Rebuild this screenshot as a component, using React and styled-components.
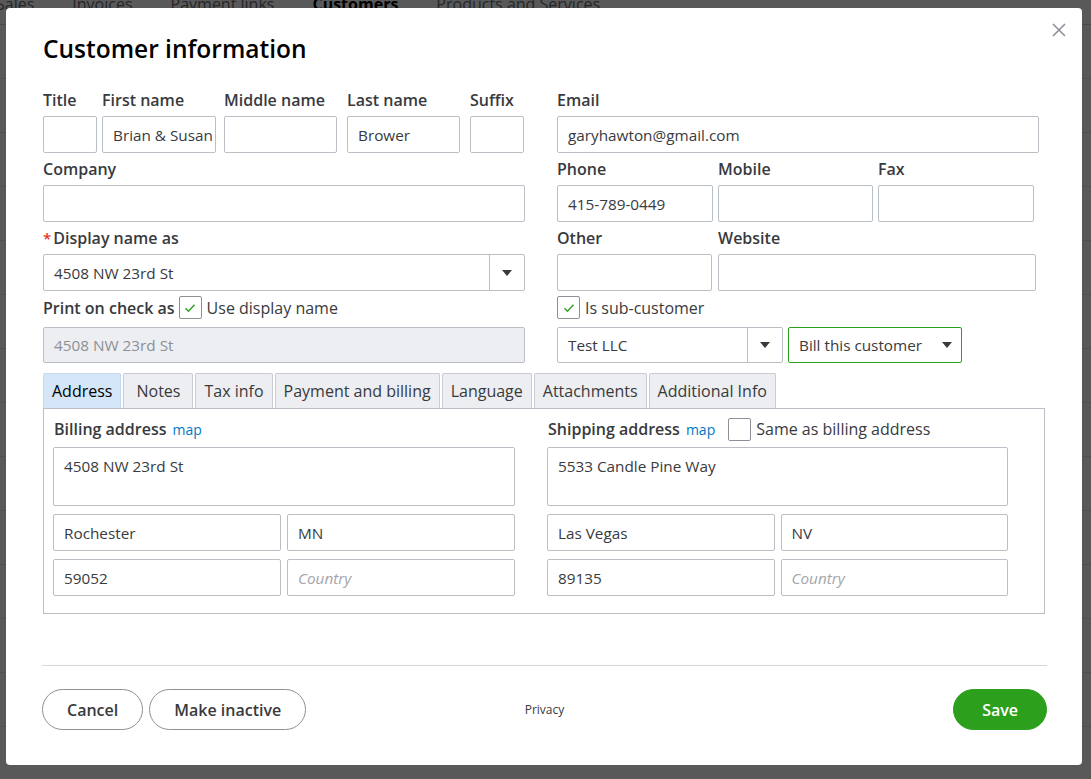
import React from 'react'
import styled, { createGlobalStyle } from 'styled-components'

const GlobalStyle = createGlobalStyle`
  * { box-sizing: border-box; }
  html, body { margin: 0; height: 100%; }
  body {
    font-family: "Open Sans", "Noto Sans", sans-serif;
    color: #393a3d;
    overflow: hidden;
  }
`

const Screen = styled.div`
  position: relative;
  width: 100vw;
  height: 100vh;
  background: #fff;
  overflow: hidden;
`

const BackPage = styled.div`
  display: flex;
  flex-direction: column;
`

const TopNav = styled.nav`
  display: flex;
  gap: 38px;
  margin: -16px 0 0 -4px;
  height: 41px;
  align-items: center;
  border-bottom: 1px solid #d4d7dc;
  font-size: 16px;
  color: #393a3d;
`

const NavItem = styled.span`
  font-weight: ${(p) => (p.$active ? 700 : 400)};
  color: ${(p) => (p.$active ? '#000' : '#6b6c72')};
`

const BackRow = styled.div`
  height: 54px;
  border-bottom: 1px solid #e3e5e8;
`

const Overlay = styled.div`
  position: absolute;
  inset: 0;
  background: rgba(0, 0, 0, 0.65);
  display: flex;
  padding: 8px 9px 14px 6px;
`

const Modal = styled.div`
  position: relative;
  flex: 1;
  background: #fff;
  border-radius: 4px;
  padding: 0 35px 35px 36px;
  display: flex;
  flex-direction: column;
`

const CloseButton = styled.button`
  position: absolute;
  top: 15px;
  right: 16px;
  width: 14px;
  height: 14px;
  padding: 0;
  border: 0;
  background: none;
  display: flex;
`

const Title = styled.h1`
  margin: 24px 0 18px 1px;
  font-size: 24.5px;
  line-height: 34px;
  font-weight: 600;
  color: #000;
`

const Form = styled.div`
  display: grid;
  grid-template-columns: 482px 482px;
  column-gap: 32px;
  margin-left: 1px;
`

const Column = styled.div`
  display: flex;
  flex-direction: column;
`

const NameRow = styled.div`
  display: flex;
`

const Row = styled.div`
  display: grid;
  grid-template-columns: ${(p) => p.$cols};
  column-gap: ${(p) => p.$gap || 5}px;
`

const Field = styled.div`
  display: flex;
  flex-direction: column;
  min-width: 0;
  width: ${(p) => (p.$w ? `${p.$w}px` : 'auto')};
  margin-left: ${(p) => p.$ml || 0}px;
`

const Label = styled.label`
  height: 32px;
  display: flex;
  align-items: center;
  font-size: 16px;
  font-weight: 600;
  color: #393a3d;
  white-space: nowrap;
`

const Required = styled.span`
  color: #e4361e;
  font-size: 15px;
  margin-right: 2px;
`

const Input = styled.div`
  height: ${(p) => p.$h || 37}px;
  border: 1px solid #babec5;
  border-radius: 2px;
  background: ${(p) => (p.$disabled ? '#eceef1' : '#fff')};
  color: ${(p) => (p.$disabled ? '#8d9096' : p.$placeholder ? '#a3a5aa' : '#393a3d')};
  font-style: ${(p) => (p.$placeholder ? 'italic' : 'normal')};
  font-size: 15.3px;
  padding: ${(p) => (p.$multi ? '8px 10px' : '0 10px')};
  display: flex;
  align-items: ${(p) => (p.$multi ? 'flex-start' : 'center')};
  white-space: nowrap;
  overflow: hidden;
`

const Select = styled.div`
  height: ${(p) => p.$h || 37}px;
  border: 1px solid ${(p) => (p.$accent ? '#2ca01c' : '#babec5')};
  border-radius: 2px;
  display: flex;
  align-items: center;
  font-size: 15.3px;
  color: #393a3d;
`

const SelectValue = styled.span`
  flex: 1;
  padding: 0 10px;
  white-space: nowrap;
`

const SelectButton = styled.span`
  width: ${(p) => (p.$plain ? 38 : 35)}px;
  align-self: stretch;
  display: flex;
  align-items: center;
  justify-content: center;
  border-left: ${(p) => (p.$plain ? 'none' : '1px solid #babec5')};
`

const CheckRow = styled.div`
  height: 36px;
  display: flex;
  align-items: center;
  gap: 4px;
  padding-bottom: 3px;
  font-size: 16px;
  color: #393a3d;
`

const CheckLabel = styled.span`
  font-size: 16px;
  font-weight: 600;
  color: #393a3d;
`

const Box = styled.span`
  width: 23px;
  height: 23px;
  margin-right: 1px;
  border: 1px solid #8d9096;
  border-radius: 2px;
  display: flex;
  align-items: center;
  justify-content: center;
  background: #fff;
`

const Tabs = styled.div`
  display: flex;
  gap: 2px;
  margin-top: 10px;
  width: 1002px;
  margin-left: 1px;
  border-bottom: 1px solid #babec5;
`

const Tab = styled.div`
  height: 35px;
  min-width: 70px;
  padding: 0 8px;
  display: flex;
  align-items: center;
  justify-content: center;
  font-size: 16px;
  color: ${(p) => (p.$active ? '#000' : '#393a3d')};
  background: ${(p) => (p.$active ? '#d4e6f8' : '#eceef1')};
  border: 1px solid ${(p) => (p.$active ? '#c4daf0' : '#c9ccd1')};
  border-bottom: none;
  border-radius: 2px 2px 0 0;
`

const Panel = styled.div`
  width: 1002px;
  margin-left: 1px;
  border: 1px solid #babec5;
  border-top: none;
  padding: 4px 36px 17px 9px;
  display: grid;
  grid-template-columns: 462px 461px;
  column-gap: 32px;
`

const AddressHead = styled.div`
  height: 34px;
  display: flex;
  align-items: center;
  gap: 6px;
  padding-left: 1px;
  padding-bottom: 2px;
`

const MapLink = styled.a`
  font-size: 14px;
  color: #0077c5;
  text-decoration: none;
  margin-right: 7px;
`

const SameText = styled.span`
  font-size: 16px;
  color: #393a3d;
  margin-left: -2px;
`

const AddressGrid = styled.div`
  display: grid;
  grid-template-columns: 1fr 1fr;
  gap: 8px 6px;
  margin-top: 8px;
`

const Footer = styled.div`
  margin-top: auto;
  border-top: 1px solid #d4d7dc;
  padding-top: 23px;
  display: grid;
  grid-template-columns: 1fr auto 1fr;
  align-items: center;
`

const ButtonGroup = styled.div`
  display: flex;
  gap: 6px;
  justify-content: ${(p) => (p.$end ? 'flex-end' : 'flex-start')};
`

const Button = styled.button`
  height: 41px;
  padding: 0 ${(p) => p.$pad || 24}px;
  border-radius: 21px;
  border: 1px solid ${(p) => (p.$primary ? '#2ca01c' : '#8d9096')};
  background: ${(p) => (p.$primary ? '#2ca01c' : '#fff')};
  color: ${(p) => (p.$primary ? '#fff' : '#393a3d')};
  font-family: inherit;
  font-size: 16px;
  font-weight: 600;
`

const Privacy = styled.span`
  font-size: 12px;
  color: #393a3d;
`

const Caret = () => (
  <svg width="10" height="6" viewBox="0 0 10 6">
    <path d="M0 0h10L5 6z" fill="#393a3d" />
  </svg>
)

const Check = ({ checked }) => (
  <Box>
    {checked && (
      <svg width="12" height="10" viewBox="0 0 12 10">
        <path d="M1.5 5.2l3 3 6-6.5" fill="none" stroke="#2ca01c" strokeWidth="1.4" />
      </svg>
    )}
  </Box>
)

const navItems = ['Sales', 'Invoices', 'Payment links', 'Customers', 'Products and Services']
const tabs = ['Address', 'Notes', 'Tax info', 'Payment and billing', 'Language', 'Attachments', 'Additional Info']

const nameFields = [
  { label: 'Title', w: 54, ml: 0 },
  { label: 'First name', w: 114, ml: 5, value: 'Brian & Susan' },
  { label: 'Middle name', w: 113, ml: 8 },
  { label: 'Last name', w: 113, ml: 10, value: 'Brower' },
  { label: 'Suffix', w: 54, ml: 10 },
]

const Address = ({ title, street, city, state, zip, same }) => (
  <Column>
    <AddressHead>
      <CheckLabel>{title}</CheckLabel>
      <MapLink>map</MapLink>
      {same && (
        <>
          <Check />
          <SameText>Same as billing address</SameText>
        </>
      )}
    </AddressHead>
    <Input $h={59} $multi>{street}</Input>
    <AddressGrid>
      <Input>{city}</Input>
      <Input>{state}</Input>
      <Input>{zip}</Input>
      <Input $placeholder>Country</Input>
    </AddressGrid>
  </Column>
)

export default function App() {
  return (
    <>
      <GlobalStyle />
      <Screen>
        <BackPage>
          <TopNav>
            {navItems.map((n) => (
              <NavItem key={n} $active={n === 'Customers'}>{n}</NavItem>
            ))}
          </TopNav>
          {Array.from({ length: 14 }).map((_, i) => (
            <BackRow key={i} />
          ))}
        </BackPage>
        <Overlay>
          <Modal>
            <CloseButton aria-label="Close">
              <svg width="14" height="14" viewBox="0 0 14 14">
                <path d="M1 1l12 12M13 1L1 13" stroke="#8d9096" strokeWidth="1.6" />
              </svg>
            </CloseButton>
            <Title>Customer information</Title>
            <Form>
              <Column>
                <NameRow>
                  {nameFields.map((f) => (
                    <Field key={f.label} $w={f.w} $ml={f.ml}>
                      <Label>{f.label}</Label>
                      <Input>{f.value}</Input>
                    </Field>
                  ))}
                </NameRow>
                <Field>
                  <Label>Company</Label>
                  <Input />
                </Field>
                <Field>
                  <Label><Required>*</Required>Display name as</Label>
                  <Select>
                    <SelectValue>4508 NW 23rd St</SelectValue>
                    <SelectButton><Caret /></SelectButton>
                  </Select>
                </Field>
                <CheckRow>
                  <CheckLabel>Print on check as</CheckLabel>
                  <Check checked />
                  <span>Use display name</span>
                </CheckRow>
                <Input $h={36} $disabled>4508 NW 23rd St</Input>
              </Column>
              <Column>
                <Field>
                  <Label>Email</Label>
                  <Input>garyhawton@gmail.com</Input>
                </Field>
                <Row $cols="156px 155px 156px">
                  <Field><Label>Phone</Label><Input>415-789-0449</Input></Field>
                  <Field><Label>Mobile</Label><Input /></Field>
                  <Field><Label>Fax</Label><Input /></Field>
                </Row>
                <Row $cols="155px 318px" $gap={6}>
                  <Field><Label>Other</Label><Input /></Field>
                  <Field><Label>Website</Label><Input /></Field>
                </Row>
                <CheckRow>
                  <Check checked />
                  <span>Is sub-customer</span>
                </CheckRow>
                <Row $cols="226px 174px">
                  <Select $h={36}>
                    <SelectValue>Test LLC</SelectValue>
                    <SelectButton><Caret /></SelectButton>
                  </Select>
                  <Select $h={36} $accent>
                    <SelectValue>Bill this customer</SelectValue>
                    <SelectButton $plain><Caret /></SelectButton>
                  </Select>
                </Row>
              </Column>
            </Form>
            <Tabs>
              {tabs.map((t) => (
                <Tab key={t} $active={t === 'Address'}>{t}</Tab>
              ))}
            </Tabs>
            <Panel>
              <Address title="Billing address" street="4508 NW 23rd St" city="Rochester" state="MN" zip="59052" />
              <Address title="Shipping address" street="5533 Candle Pine Way" city="Las Vegas" state="NV" zip="89135" same />
            </Panel>
            <Footer>
              <ButtonGroup>
                <Button>Cancel</Button>
                <Button>Make inactive</Button>
              </ButtonGroup>
              <Privacy>Privacy</Privacy>
              <ButtonGroup $end>
                <Button $primary $pad={28}>Save</Button>
              </ButtonGroup>
            </Footer>
          </Modal>
        </Overlay>
      </Screen>
    </>
  )
}
